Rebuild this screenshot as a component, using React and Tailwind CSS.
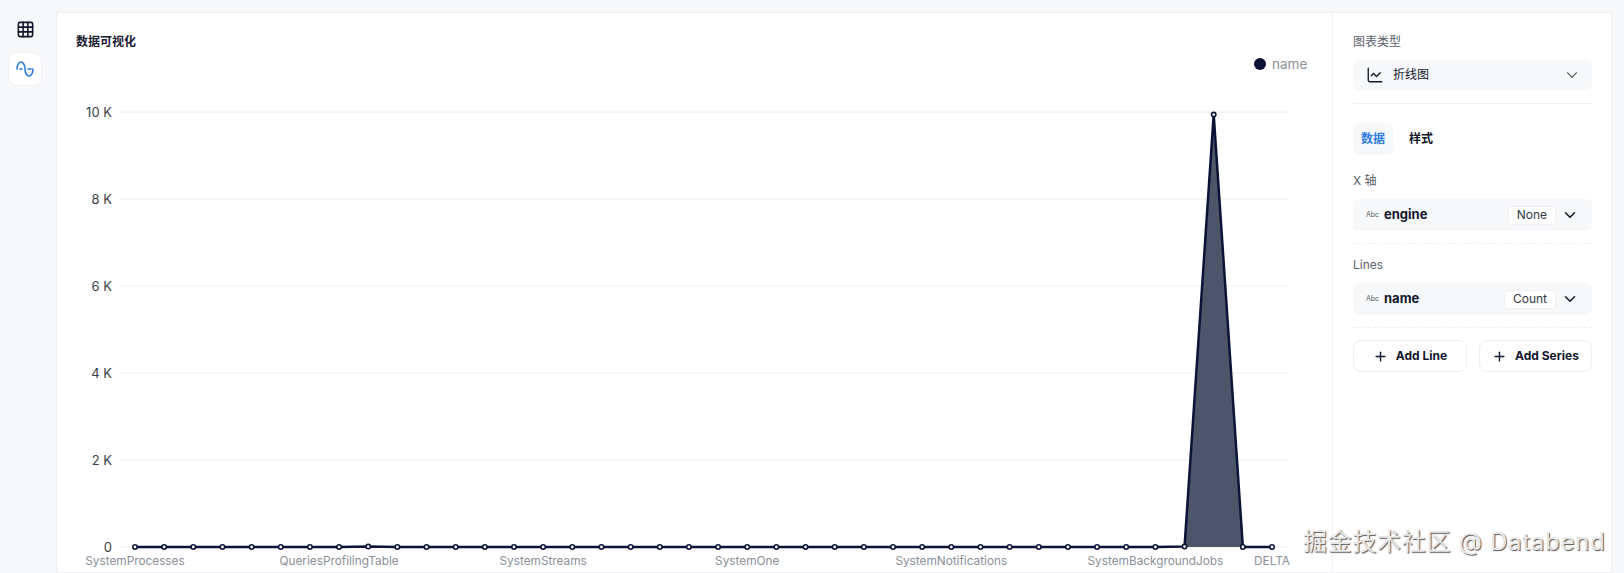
import { ChartLine, ChevronDown, Grid3x3, Plus } from 'lucide-react';

const sans = 'font-[Inter,"Noto_Sans_CJK_SC",sans-serif]';

// 40 points along the x axis, only a few of them are off the baseline
const X0 = 135;
const STEP = 29.154;
const Y0 = 547;
const PER_K = 43.5;
const values = Array.from({ length: 40 }, (_, i) => {
  if (i === 37) return 9.94;
  if (i === 8) return 0.01;
  if (i === 36) return 0.01;
  return 0;
});
const points = values.map((v, i) => [X0 + i * STEP, Y0 - v * PER_K]);
const linePath = points.map((p) => p.join(',')).join(' ');
const areaPath = `${X0},${Y0} ${linePath} ${points[39][0]},${Y0}`;

const yTicks = [
  { label: '10 K', y: 112 },
  { label: '8 K', y: 199 },
  { label: '6 K', y: 286 },
  { label: '4 K', y: 373 },
  { label: '2 K', y: 460 },
  { label: '0', y: 547 },
];

const xLabels = [
  { label: 'SystemProcesses', i: 0 },
  { label: 'QueriesProfilingTable', i: 7 },
  { label: 'SystemStreams', i: 14 },
  { label: 'SystemOne', i: 21 },
  { label: 'SystemNotifications', i: 28 },
  { label: 'SystemBackgroundJobs', i: 35 },
  { label: 'DELTA', i: 39 },
];

function Chart() {
  return (
    <svg viewBox="57 56 1275 517" width="1275" height="517" className="block">
      <circle cx="1260" cy="64" r="6" fill="#0b1437" />
      <text x="1272" y="68.5" fontSize="13.5" fill="#8a8f98" fontFamily="Inter, sans-serif">
        name
      </text>
      {yTicks.map((t) => (
        <g key={t.label}>
          <line x1="120" x2="1288" y1={t.y} y2={t.y} stroke="#eeeeee" />
          <text x="112" y={t.y + 4.5} textAnchor="end" fontSize="13" fill="#3b3f46" fontFamily="Inter, sans-serif">
            {t.label}
          </text>
        </g>
      ))}
      <polygon points={areaPath} fill="#4d5668" />
      <polyline points={linePath} fill="none" stroke="#0b1437" strokeWidth="2.5" />
      {points.map((p, i) => (
        <circle key={i} cx={p[0]} cy={p[1]} r="2.2" fill="#ffffff" stroke="#0b1437" strokeWidth="1.6" />
      ))}
      {xLabels.map((l) => (
        <text
          key={l.label}
          x={X0 + l.i * STEP}
          y="565"
          textAnchor="middle"
          fontSize="11.8"
          fill="#8a8f98"
          fontFamily="Inter, sans-serif"
        >
          {l.label}
        </text>
      ))}
    </svg>
  );
}

function FieldRow({ name, agg }) {
  return (
    <div className="flex items-center h-[32px] rounded-md bg-[#f6f8fa] pl-[13px] pr-[13px]">
      <span className="text-[7px] text-[#555b66] w-[18px]">Abc</span>
      <span className="text-[13px] font-bold text-[#11162a]">{name}</span>
      <span className="ml-auto h-[19px] flex items-center px-2 bg-white rounded-sm border border-[#f0f1f4] text-xs text-[#333842]">
        {agg}
      </span>
      <ChevronDown size={18} strokeWidth={2} className="ml-[5px] text-[#11162a]" />
    </div>
  );
}

function AddButton({ label, className }) {
  return (
    <button className={`flex items-center justify-center gap-2 h-[32px] rounded-lg border border-[#eceef1] bg-white text-xs font-bold text-[#11162a] ${className}`}>
      <Plus size={15} strokeWidth={2.25} />
      {label}
    </button>
  );
}

export default function App() {
  return (
    <div className={`relative h-[573px] w-[1624px] overflow-hidden bg-[#f6f8fa] flex ${sans}`}>
      {/* Left icon rail */}
      <aside className="w-[56px] shrink-0 pl-2 pt-[12px]">
        <div className="w-[34px] h-[34px] flex items-center justify-center">
          <Grid3x3 size={19} strokeWidth={2} className="text-[#11162a]" />
        </div>
        <div className="mt-[6px] w-[34px] h-[34px] rounded-lg bg-white border border-[#f0f1f4] flex items-center justify-center">
          <svg width="18" height="18" viewBox="0 0 18 18" fill="none" stroke="#2f7de1" strokeWidth="1.6" strokeLinecap="round">
            <path d="M1 9C1 4.5 3 2 5 2s4 3 4 7 2 7 4 7 4-2.5 4-7" />
            <path d="M4 9h2M12 9h3" />
          </svg>
        </div>
      </aside>

      {/* Main card */}
      <main className="flex-1 mr-3 mt-3 bg-white border border-[#eef0f3] flex min-w-0">
        <section className="w-[1275px] shrink-0">
          <h1 className="pl-[19px] pt-[21px] h-[43px] text-xs font-bold text-[#1b2033]">数据可视化</h1>
          <Chart />
        </section>

        <section className="flex-1 border-l border-[#eef0f3] pl-5 pr-[19px] pt-[20px]">
          <div className="text-xs leading-[18px] text-[#5c616b]">图表类型</div>
          <div className="mt-[9px] h-[30px] flex items-center rounded-md bg-[#f6f8fa] pl-[13px] pr-[11px]">
            <ChartLine size={18} strokeWidth={1.75} className="text-[#11162a]" />
            <span className="ml-[9px] text-xs text-[#11162a]">折线图</span>
            <ChevronDown size={18} strokeWidth={1.5} className="ml-auto text-[#5c616b]" />
          </div>
          <div className="mt-[13px] border-t border-[#eef0f3]" />

          <div className="mt-[19px] flex items-center">
            <span className="w-[40px] h-[32px] flex items-center justify-center rounded-md bg-[#f6f8fa] text-xs font-bold text-[#2f7de1]">
              数据
            </span>
            <span className="ml-[16px] text-xs font-bold text-[#11162a]">样式</span>
          </div>

          <div className="mt-[17px] text-xs leading-[18px] text-[#5c616b]">X 轴</div>
          <div className="mt-[9px]">
            <FieldRow name="engine" agg="None" />
          </div>
          <div className="mt-[12px] border-t border-dashed border-[#eef0f3]" />

          <div className="mt-[12px] text-xs leading-[18px] text-[#5c616b]">Lines</div>
          <div className="mt-[9px]">
            <FieldRow name="name" agg="Count" />
          </div>
          <div className="mt-[12px] border-t border-dashed border-[#eef0f3]" />

          <div className="mt-[12px] flex gap-3">
            <AddButton label="Add Line" className="w-[114px]" />
            <AddButton label="Add Series" className="flex-1" />
          </div>
        </section>
      </main>

      {/* Site watermark over the screenshot */}
      <div className="absolute left-[1303px] top-[526px] text-[24px] leading-[32px] tracking-[0.7px] whitespace-nowrap text-[#e8e8e8] [text-shadow:1px_1px_1px_#555]">
        掘金技术社区 @ Databend
      </div>
    </div>
  );
}
